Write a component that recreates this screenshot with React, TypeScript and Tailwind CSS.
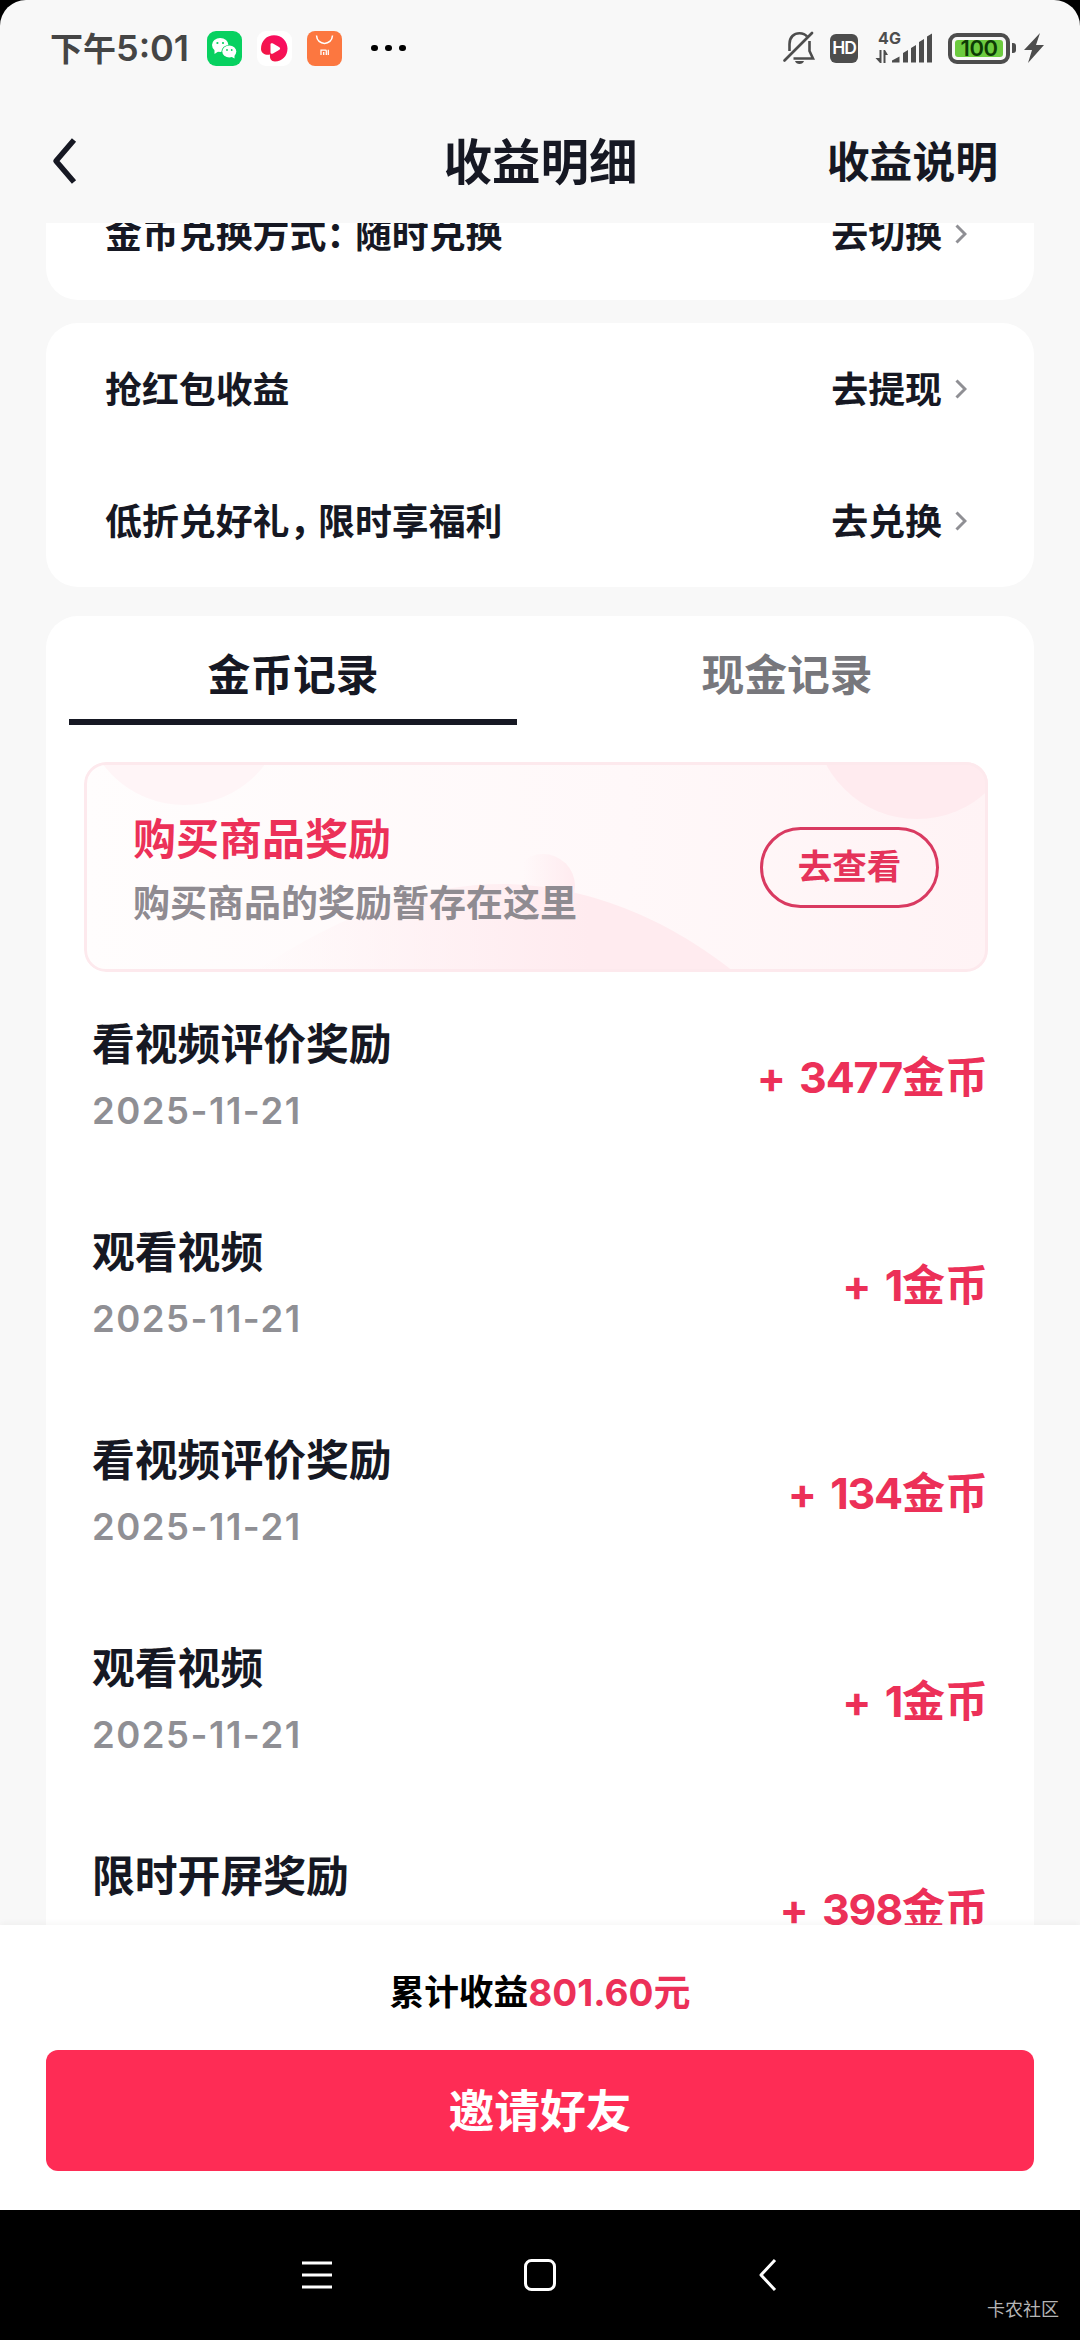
import React from "react";

const records = [
  { judul: "看视频评价奖励", tanggal: "2025-11-21", jumlah: "3477" },
  { judul: "观看视频", tanggal: "2025-11-21", jumlah: "1" },
  { judul: "看视频评价奖励", tanggal: "2025-11-21", jumlah: "134" },
  { judul: "观看视频", tanggal: "2025-11-21", jumlah: "1" },
  { judul: "限时开屏奖励", tanggal: "2025-11-21", jumlah: "398" },
];

function StatusBar() {
  return (
    <div className="flex h-[96px] shrink-0 items-center pl-[50px] pr-[36px] text-[#454545]">
      <span className="w-[157px] whitespace-nowrap text-[33px] font-bold leading-none">
        下午<span className="text-[36px] font-semibold">5:01</span>
      </span>

      {/* WeChat */}
      <svg width="35" height="35" viewBox="0 0 35 35">
        <rect width="35" height="35" rx="9" fill="#07d160" />
        <ellipse cx="13.2" cy="14" rx="8.2" ry="7" fill="#fff" />
        <path d="M7.5 18 L7.5 23 L12 20 Z" fill="#fff" />
        <ellipse cx="22.3" cy="20.6" rx="7.8" ry="6.7" fill="#07d160" />
        <ellipse cx="22.3" cy="20.6" rx="7" ry="6" fill="#fff" />
        <path d="M23 25 L27.5 27.5 L27.5 23 Z" fill="#fff" />
        <circle cx="10.4" cy="12" r="1.1" fill="#07d160" />
        <circle cx="16" cy="12" r="1.1" fill="#07d160" />
        <circle cx="20" cy="19" r="0.9" fill="#07d160" />
        <circle cx="24.7" cy="19" r="0.9" fill="#07d160" />
      </svg>

      {/* Video app */}
      <svg className="ml-[15px]" width="35" height="35" viewBox="0 0 35 35">
        <defs>
          <linearGradient id="video" x1="0" y1="1" x2="1" y2="0">
            <stop offset="0" stopColor="#f01a3c" />
            <stop offset="1" stopColor="#fb0a6a" />
          </linearGradient>
        </defs>
        <rect width="35" height="35" rx="9" fill="#fff" />
        <path
          d="M4 18 C4 9.500 10 4.300 17 4.300 C25 4.300 30.500 10.500 30.500 17.500 C30.500 25 25 30.500 18 30.500 C14 30.500 12.500 27.500 13 23.500 C9 24.500 4 22.500 4 18 Z"
          fill="url(#video)"
        />
        <path d="M13.500 13.500 C13.500 12 15 12 16 12.500 L22 16 C23.500 17 23.500 18 22 19 L16 22.500 C15 23 13.500 23 13.500 21.500 Z" fill="#fff" />
      </svg>

      {/* Mi store */}
      <svg className="ml-[15px]" width="35" height="35" viewBox="0 0 35 35">
        <rect width="35" height="35" rx="8" fill="#fc7740" />
        <path d="M9.500 4.500 C10 15 25 15 25.500 4.500" fill="none" stroke="#fff" strokeWidth="1.500" />
        <path d="M14 24 V19.200 H18.500 Q19.300 19.200 19.300 20 V24 M16.700 21 V24 M21.300 18.800 V24" fill="none" stroke="#fff" strokeWidth="1.300" />
      </svg>

      <div className="ml-[29px] flex gap-[7.5px]">
        <i className="size-[6.5px] rounded-full bg-black" />
        <i className="size-[6.5px] rounded-full bg-black" />
        <i className="size-[6.5px] rounded-full bg-black" />
      </div>

      <div className="ml-auto flex items-center">
        <svg width="32" height="34" viewBox="0 0 32 34" fill="none" stroke="#4d4d4d">
          <path d="M6.500 20 V13 C6.500 6 11 2.200 16.500 2.200 C20 2.200 22.500 3.500 24 5.500 M26.500 10 V20 L30 27.500 H10.500" strokeWidth="2.600" />
          <path d="M29 2 L1.500 29.500" strokeWidth="2.600" strokeLinecap="round" />
          <path d="M12 30 H21 C20 34 13 34 12 30 Z" fill="#4d4d4d" stroke="none" />
        </svg>
        <span className="ml-[15px] flex h-[29px] w-[28px] items-center justify-center rounded-[6px] bg-[#4d4d4d] text-[17.5px] font-semibold leading-none tracking-[-1px] text-white">
          HD
        </span>
        <svg className="ml-[17px]" width="58" height="34" viewBox="0 0 58 34" fill="#4d4d4d">
          <text x="3" y="13" fontSize="16" fontWeight="700" fontFamily="Inter" textLength="23">
            4G
          </text>
          <path d="M4.500 19 H6.500 V32 H5 L0.500 27 H4.500 Z M8.500 19 H10 L13 24 H10.500 V32 H8.500 Z" />
          <path d="M17 31.500 V29.500 L24.500 25.500 V31.500 Z M28 31.500 V22 L33 19 V31.500 Z M36 31.500 V17 L41 14 V31.500 Z M44 31.500 V11 L49 8 V31.500 Z M52 31.500 V5.500 L57 2.500 V31.500 Z" />
        </svg>
        <div className="ml-[15px] flex h-[31px] w-[62px] rounded-[9px] border-4 border-[#4d4d4d] p-[3px]">
          <span className="flex flex-1 items-center justify-center rounded-[3px] bg-[#6ccb3f] text-[22px] font-semibold leading-none tracking-[-0.5px] text-[#0d3b05]">
            100
          </span>
        </div>
        <i className="ml-[2px] h-[10px] w-[4px] rounded-r-[3px] bg-[#4d4d4d]" />
        <svg className="ml-[8px]" width="20" height="30" viewBox="0 0 20 30" fill="#4d4d4d">
          <path d="M16 0 L0 17 H8 L4 30 L20 12 H12 Z" />
        </svg>
      </div>
    </div>
  );
}

function Row({ label, action }: { label: React.ReactNode; action: string }) {
  return (
    <div className="flex h-[132px] items-center justify-between pl-[59px] pr-[67px] pt-[3px] text-[36.9px] font-bold leading-none text-[#161823]">
      <span>{label}</span>
      <span className="flex items-center">
        {action}
        <svg className="mb-[3px] ml-[13px]" width="12" height="20" viewBox="0 0 12 20" fill="none" stroke="#8f8f94" strokeWidth="3">
          <path d="M1.500 1.500 L10 10 L1.500 18.500" />
        </svg>
      </span>
    </div>
  );
}

export default function App() {
  return (
    <div className="h-[2340px] w-[1080px] overflow-hidden bg-black font-['Inter','Noto_Sans_CJK_SC',sans-serif]">
      <div className="flex h-[2210px] flex-col overflow-hidden rounded-t-[26px] bg-[#f8f8f8]">
        <StatusBar />

        {/* Header */}
        <header className="grid h-[127px] shrink-0 grid-cols-3 items-center pl-[51px] pr-[82px] pt-[7px] font-bold leading-none text-[#161823]">
          <svg width="26" height="50" viewBox="0 0 26 50" fill="none" stroke="#161823" strokeWidth="5.500">
            <path d="M23 2 L5 23 L23 44" strokeLinejoin="round" />
          </svg>
          <h1 className="whitespace-nowrap pl-[32px] text-center text-[48.5px]">收益明细</h1>
          <span className="text-right text-[42.800px]">收益说明</span>
        </header>

        {/* Scroll area */}
        <main className="flex-1 overflow-hidden px-[46px]">
          <div className="mt-[-55px] rounded-[32px] bg-white">
            <Row
              label={
                <>
                  金币兑换方式<span className="tracking-[-8.300px]">：</span>随时兑换
                </>
              }
              action="去切换"
            />
          </div>
          <div className="mt-[23px] rounded-[32px] bg-white">
            <Row label="抢红包收益" action="去提现" />
            <Row
              label={
                <>
                  低折兑好礼<span className="tracking-[-8.300px]">，</span>限时享福利
                </>
              }
              action="去兑换"
            />
          </div>

          <section className="mt-[29px] rounded-t-[32px] bg-white">
            {/* Tabs */}
            <div className="grid h-[109px] grid-cols-2 text-center text-[42.800px] font-bold leading-[120px]">
              <button className="flex flex-col items-center text-[#161823]">
                <span className="h-[103px]">金币记录</span>
                <i className="h-[6px] w-[448px] bg-[#161823]" />
              </button>
              <button className="flex flex-col items-center text-[#77777c]">
                <span className="h-[103px]">现金记录</span>
              </button>
            </div>

            {/* Banner */}
            <div className="relative ml-[38px] mt-[37px] h-[210px] w-[904px] overflow-hidden rounded-[22px]">
              <svg className="absolute inset-0" width="904" height="210" viewBox="0 0 904 210">
                <defs>
                  <linearGradient id="bg" x1="0" y1="0" x2="1" y2="0">
                    <stop offset="0" stopColor="#fffdfd" />
                    <stop offset="0.6" stopColor="#fff8f9" />
                    <stop offset="1" stopColor="#fff3f5" />
                  </linearGradient>
                  <linearGradient id="wave" x1="0" y1="0" x2="1" y2="0">
                    <stop offset="0" stopColor="#ffebef" stopOpacity="0" />
                    <stop offset="0.7" stopColor="#ffebef" />
                  </linearGradient>
                  <linearGradient id="ball" x1="0" y1="0" x2="1" y2="0">
                    <stop offset="0.2" stopColor="#ffebef" stopOpacity="0" />
                    <stop offset="1" stopColor="#ffebef" />
                  </linearGradient>
                </defs>
                <rect width="904" height="210" fill="url(#bg)" />
                <circle cx="100" cy="-58" r="101" fill="#fff5f7" />
                <circle cx="833" cy="-46" r="103" fill="#ffebef" />
                <circle cx="459" cy="124" r="32" fill="url(#ball)" />
                <path d="M170 210 C260 150 340 122 420 122 C520 124 600 170 650 210 Z" fill="url(#wave)" />
              </svg>
              <div className="relative flex h-full items-center justify-between rounded-[22px] border-[3px] border-[#fde9ed] px-[46px]">
                <div className="pt-[9px]">
                  <p className="text-[43px] font-bold leading-[50px] text-[#ec3058]">购买商品奖励</p>
                  <p className="mt-[15px] text-[37px] font-bold leading-[50px] text-[#8f8b91]">
                    购买商品的奖励暂存在这里
                  </p>
                </div>
                <button className="flex h-[81px] w-[179px] items-center justify-center rounded-full border-[3px] border-[#d93a61] text-[34.5px] font-bold leading-none text-[#e5335a]">
                  去查看
                </button>
              </div>
            </div>

            {/* Records */}
            <div className="pt-[2px]">
              {records.map((r, i) => (
                <div key={i} className="flex h-[208px] items-center justify-between pl-[46px] pr-[46px]">
                  <div>
                    <p className="text-[42.800px] font-bold leading-[60px] text-[#161823]">{r.judul}</p>
                    <p className="mt-[6px] text-[36.5px] font-semibold leading-[60px] tracking-[1.500px] text-[#8f8f94]">
                      {r.tanggal}
                    </p>
                  </div>
                  <p className="pb-[2px] text-[43px] font-bold leading-none text-[#ec3058] [word-spacing:3px]">
                    + <span className="tracking-[-1.200px]">{r.jumlah}</span>金币
                  </p>
                </div>
              ))}
            </div>
          </section>
        </main>

        {/* Bottom bar */}
        <footer className="flex h-[285px] shrink-0 flex-col bg-white px-[46px] shadow-[0_-2px_6px_rgba(0,0,0,0.04)]">
          <p className="flex h-[125px] items-center justify-center pt-[10px] font-bold leading-none">
            <span className="text-[34.700px] text-black">累计收益</span>
            <span className="text-[37px] text-[#ec3058]">801.60元</span>
          </p>
          <button className="h-[121px] rounded-[12px] bg-[#fe2c55] pt-[3px] text-[45.800px] font-bold text-white">
            邀请好友
          </button>
        </footer>
      </div>

      {/* System navigation */}
      <nav className="relative flex h-[130px] items-center pl-[301px] text-white">
        <svg width="32" height="34" viewBox="0 0 32 34" stroke="#fff" strokeWidth="3">
          <path d="M1 5 H31 M1 17 H31 M1 29 H31" />
        </svg>
        <svg className="ml-[190px]" width="34" height="34" viewBox="0 0 34 34" fill="none" stroke="#fff" strokeWidth="3">
          <rect x="2.500" y="2.500" width="29" height="29" rx="6" />
        </svg>
        <svg className="ml-[201px]" width="20" height="34" viewBox="0 0 20 34" fill="none" stroke="#fff" strokeWidth="3">
          <path d="M17 2 L3 17 L17 32" strokeLinejoin="round" />
        </svg>
        <span className="absolute bottom-[20px] right-[21px] text-[18px] leading-[20px] text-[#b5b5b5]">卡农社区</span>
      </nav>
    </div>
  );
}
